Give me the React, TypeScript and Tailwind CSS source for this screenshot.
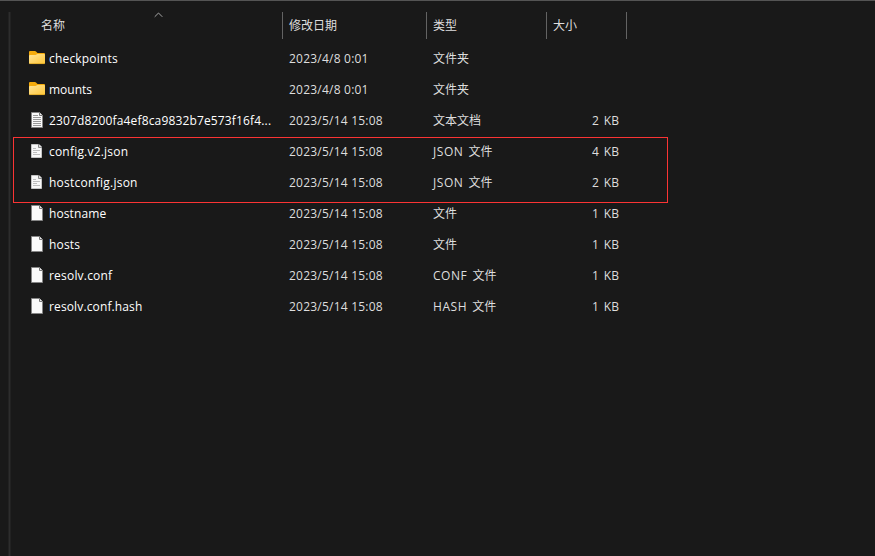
type Kind = 'folder' | 'text' | 'json' | 'blank';

interface Entry {
  name: string;
  date: string;
  type: string;
  size: string;
  kind: Kind;
  nameSpacing: string;
}

const entries: Entry[] = [
  { name: 'checkpoints', date: '2023/4/8 0:01', type: '文件夹', size: '', kind: 'folder', nameSpacing: 'tracking-[0.18px]' },
  { name: 'mounts', date: '2023/4/8 0:01', type: '文件夹', size: '', kind: 'folder', nameSpacing: 'tracking-normal' },
  { name: '2307d8200fa4ef8ca9832b7e573f16f4...', date: '2023/5/14 15:08', type: '文本文档', size: '2 KB', kind: 'text', nameSpacing: 'tracking-[0.15px]' },
  { name: 'config.v2.json', date: '2023/5/14 15:08', type: 'JSON 文件', size: '4 KB', kind: 'json', nameSpacing: 'tracking-[0.2px]' },
  { name: 'hostconfig.json', date: '2023/5/14 15:08', type: 'JSON 文件', size: '2 KB', kind: 'json', nameSpacing: 'tracking-[0.25px]' },
  { name: 'hostname', date: '2023/5/14 15:08', type: '文件', size: '1 KB', kind: 'blank', nameSpacing: 'tracking-[0.1px]' },
  { name: 'hosts', date: '2023/5/14 15:08', type: '文件', size: '1 KB', kind: 'blank', nameSpacing: 'tracking-[0.15px]' },
  { name: 'resolv.conf', date: '2023/5/14 15:08', type: 'CONF 文件', size: '1 KB', kind: 'blank', nameSpacing: 'tracking-[0.2px]' },
  { name: 'resolv.conf.hash', date: '2023/5/14 15:08', type: 'HASH 文件', size: '1 KB', kind: 'blank', nameSpacing: 'tracking-[0.13px]' },
];

function FolderIcon() {
  return (
    <svg width="16" height="16" viewBox="0 0 16 16" className="block">
      <defs>
        <linearGradient id="folderFront" x1="0" y1="0" x2="1" y2="1">
          <stop offset="0" stopColor="#ffe59a" />
          <stop offset="1" stopColor="#ffc636" />
        </linearGradient>
      </defs>
      <path d="M0 2Q0 1 1 1H6Q6.500 1 7 1.500L8.500 3H15Q16 3 16 4V9H0Z" fill="#f5ab0c" />
      <path d="M0 6Q0 5 1 5H6.500L8.500 4H15Q16 4 16 5V13Q16 14 15 14H1Q0 14 0 13Z" fill="url(#folderFront)" />
      <path d="M.5 13.6H15.5" stroke="#d9a01c" strokeWidth=".7" />
    </svg>
  );
}

function FileIcon({ kind }: { kind: Kind }) {
  if (kind === 'json') {
    return (
      <svg width="16" height="16" viewBox="0 0 16 16" className="block">
        <path d="M2.5 1.5H10L12.5 4V14.5H2.5Z" fill="#f8f8f8" stroke="#c4c4c4" />
        <path d="M9.5 1V4.5H13" fill="#ddd" stroke="#8a8a8a" />
        <path d="M4 5.5H7M4 7.5H11M4 9.5H8M4 11.500H11" stroke="#bdbdbd" />
      </svg>
    );
  }
  return (
    <svg width="16" height="16" viewBox="0 0 16 16" className="block">
      <path d="M2.500.5H10.500L13.500 3.500V15.500H2.500Z" fill="#fafafa" stroke="#858585" />
      <path d="M10.500.5V3.500H13.500" fill="#ececec" stroke="#777" />
      {kind === 'text' && (
        <path d="M4 3.500H9M4 5.500H12M4 7.500H12M4 9.500H12M4 11.500H12M4 13.500H12" stroke="#999" />
      )}
    </svg>
  );
}

function Header() {
  return (
    <div className="flex h-[27px] text-[12px] leading-[28px] text-[#dedede]">
      <div className="relative w-[272px] shrink-0 border-r border-[#636363] pl-[30px]">
        名称
        <svg width="9" height="6" viewBox="0 0 9 6" className="absolute left-[143px] top-0">
          <path d="M.7 4.800L4.500 1L8.300 4.800" fill="none" stroke="#a8a8a8" />
        </svg>
      </div>
      <div className="w-[144px] border-r border-[#636363] pl-[6px]">修改日期</div>
      <div className="w-[120px] border-r border-[#636363] pl-[6px]">类型</div>
      <div className="w-[80px] border-r border-[#636363] pl-[6px]">大小</div>
    </div>
  );
}

function TypeLabel({ value }: { value: string }) {
  const parts = value.split(' ');
  if (parts.length === 1) return <>{value}</>;
  return (
    <>
      <span className="tracking-[0.55px] [word-spacing:1.5px]">{parts[0]} </span>
      {parts[1]}
    </>
  );
}

function Row({ entry }: { entry: Entry }) {
  return (
    <div className="flex h-[31px] items-center whitespace-nowrap text-[12px] leading-[31px] text-[#dedede]">
      <div className="flex w-[278px] shrink-0 items-center pl-[18px] text-white">
        <div className="pb-[2px]">
          {entry.kind === 'folder' ? <FolderIcon /> : <FileIcon kind={entry.kind} />}
        </div>
        <span className={`ml-[4px] ${entry.nameSpacing}`}>{entry.name}</span>
      </div>
      <div className="w-[144px] shrink-0 tracking-[0.22px]">{entry.date}</div>
      <div className="w-[120px] shrink-0">
        <TypeLabel value={entry.type} />
      </div>
      <div className="w-[66px] shrink-0 text-right tracking-[0.1px] [word-spacing:1.500px]">{entry.size}</div>
    </div>
  );
}

export default function App() {
  return (
    <div className="relative flex h-[556px] w-[875px] overflow-hidden border-t border-[#545454] bg-[#191919] pt-[11px] font-['Open_Sans','Noto_Sans_CJK_SC',sans-serif]">
      <div className="ml-[8px] w-[3px] shrink-0 border-x border-[#222222] bg-[#2d2d2d]" />
      <main className="flex-1">
        <Header />
        <div className="pt-[4px]">
          {entries.map((entry) => (
            <Row key={entry.name} entry={entry} />
          ))}
        </div>
      </main>
      <div className="pointer-events-none absolute left-[13px] top-[136px] h-[66px] w-[655px] border border-[#fa3434]" />
    </div>
  );
}
